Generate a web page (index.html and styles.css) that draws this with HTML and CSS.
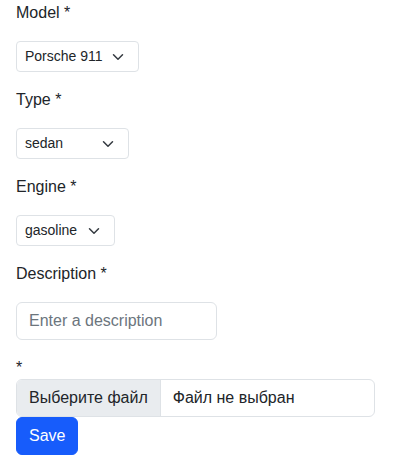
FILE: index.html
```html
<!DOCTYPE html>
<html lang="en">
<head>
<meta charset="utf-8">
<title>Car form</title>
<link rel="stylesheet" href="styles.css">
</head>
<body>
<form class="form">
  <div class="field">
    <label class="label">Model *</label>
    <div class="select select-model"><span>Porsche 911</span><svg class="chev" width="16" height="12" viewBox="0 0 16 16"><path d="m2 5 6 6 6-6" fill="none" stroke="#343a40" stroke-width="2" stroke-linecap="round" stroke-linejoin="round"/></svg></div>
  </div>
  <div class="field">
    <label class="label">Type *</label>
    <div class="select select-type"><span>sedan</span><svg class="chev" width="16" height="12" viewBox="0 0 16 16"><path d="m2 5 6 6 6-6" fill="none" stroke="#343a40" stroke-width="2" stroke-linecap="round" stroke-linejoin="round"/></svg></div>
  </div>
  <div class="field">
    <label class="label">Engine *</label>
    <div class="select select-engine"><span>gasoline</span><svg class="chev" width="16" height="12" viewBox="0 0 16 16"><path d="m2 5 6 6 6-6" fill="none" stroke="#343a40" stroke-width="2" stroke-linecap="round" stroke-linejoin="round"/></svg></div>
  </div>
  <div class="field">
    <label class="label">Description *</label>
    <input class="input" type="text" placeholder="Enter a description">
  </div>
  <div class="field-file">
    <label class="label label-file">*</label>
    <div class="file"><span class="file-btn">Выберите файл</span><span class="file-text">Файл не выбран</span></div>
  </div>
  <button class="btn" type="button">Save</button>
</form>
</body>
</html>
```
FILE: styles.css
```css
html, body {
  margin: 0;
  padding: 0;
  background: #fff;
}
body {
  font-family: "Liberation Sans", Arial, sans-serif;
  font-size: 16px;
  line-height: 24px;
  color: #212529;
}
.form {
  padding: 1px 16px 0;
}
.field {
  margin-bottom: 16px;
}
.label {
  display: block;
  font-size: 16px;
  line-height: 24px;
  margin-bottom: 16px;
}
.label-file {
  line-height: 23px;
  margin-bottom: 0;
}
.select {
  box-sizing: border-box;
  display: flex;
  align-items: center;
  justify-content: space-between;
  height: 31px;
  padding: 0 12px 0 8px;
  font-size: 14px;
  line-height: 21px;
  border: 1px solid #dee2e6;
  border-radius: 4px;
  background: #fff;
}
.select-model { width: 123px; }
.select-type { width: 113px; }
.select-engine { width: 99px; }
.chev {
  display: block;
  flex: none;
}
.input {
  box-sizing: border-box;
  display: block;
  width: 201px;
  height: 38px;
  margin: 0;
  padding: 6px 12px;
  font-family: inherit;
  font-size: 16px;
  line-height: 24px;
  color: #212529;
  background: #fff;
  border: 1px solid #dee2e6;
  border-radius: 6px;
  outline: none;
}
.input::placeholder {
  color: #6c757d;
  opacity: 1;
}
.file {
  box-sizing: border-box;
  display: flex;
  align-items: stretch;
  width: 359px;
  height: 38px;
  border: 1px solid #dee2e6;
  border-radius: 6px;
  overflow: hidden;
  background: #fff;
}
.file-btn {
  padding: 6px 12px;
  background: #e9ecef;
  border-right: 1px solid #dee2e6;
  margin-right: 12px;
  white-space: nowrap;
}
.file-text {
  padding: 6px 0;
  white-space: nowrap;
}
.btn {
  display: block;
  box-sizing: border-box;
  height: 38px;
  margin: 0;
  padding: 6px 12px;
  font-family: inherit;
  font-size: 16px;
  line-height: 24px;
  color: #fff;
  background: #175cfb;
  border: 1px solid #175cfb;
  border-radius: 6px;
}
```
